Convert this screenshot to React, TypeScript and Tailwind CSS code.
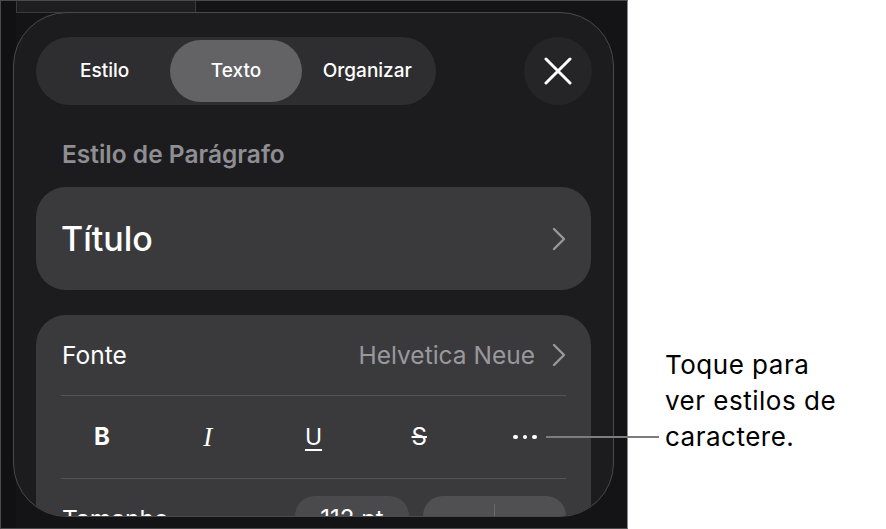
import { useState } from "react"

const TABS = ["Estilo", "Texto", "Organizar"]

function Chevron() {
  return (
    <svg width="14" height="24" viewBox="0 0 14 24" fill="none">
      <path d="M2 2 L12 12 L2 22" stroke="#98989d" strokeWidth="2.4" strokeLinecap="round" strokeLinejoin="round" />
    </svg>
  )
}

export default function App() {
  const [tab, setTab] = useState("Texto")

  return (
    <div
      className="relative flex h-[529px] w-[886px] overflow-hidden bg-white"
      style={{ fontFamily: "Inter, 'Noto Sans', sans-serif" }}
    >
      {/* iPad screen */}
      <div className="relative h-[529px] w-[628px] shrink-0 overflow-hidden border border-[#4a4a4c] border-r-[#8a8a8c] bg-[#141416]">
        <div className="absolute left-0 top-0 h-full w-[15px] bg-[#111113]" />
        <div className="absolute left-[15px] top-0 h-[12px] w-[180px] border-x border-b border-[#3a3a3c] bg-[#1e1e20]" />

        <div className="relative ml-[12px] mt-[11px] h-[505px] w-[601px] overflow-hidden rounded-[54px] border border-[#4a4a4c] bg-[#1c1c1e]">
          {/* header */}
          <div className="flex items-center justify-between pl-[22px] pr-[21px] pt-[24px]">
            <div className="grid h-[68px] w-[400px] grid-cols-3 rounded-full bg-[#2e2e30] p-[3px]">
              {TABS.map((t) => (
                <button
                  key={t}
                  onClick={() => setTab(t)}
                  className={`rounded-full text-[19px] font-medium text-white ${tab === t ? "bg-[#636366]" : ""}`}
                >
                  {t}
                </button>
              ))}
            </div>
            <button className="flex h-[68px] w-[68px] items-center justify-center rounded-full bg-[#252527]">
              <svg width="28" height="28" viewBox="0 0 28 28" fill="none">
                <path d="M2 2 L26 26 M26 2 L2 26" stroke="white" strokeWidth="3" strokeLinecap="round" />
              </svg>
            </button>
          </div>

          <div className="mt-[35px] pl-[48px] text-[24.5px] font-semibold leading-[28px] text-[#8e8e93]">
            Estilo de Parágrafo
          </div>

          <div className="mx-[22px] mt-[19px] flex h-[103px] items-center justify-between rounded-[30px] bg-[#3a3a3c] pl-[25px] pr-[25px]">
            <span className="text-[34px] font-medium text-white">Título</span>
            <Chevron />
          </div>

          {/* font group */}
          <div className="mx-[22px] mt-[25px] rounded-[30px] bg-[#3a3a3c] px-[25px]">
            <div className="flex h-[80px] items-center justify-between pl-[1px]">
              <span className="text-[24.5px] text-white">Fonte</span>
              <div className="flex items-center gap-[17px]">
                <span className="text-[24.5px] text-[#98989d]">Helvetica Neue</span>
                <Chevron />
              </div>
            </div>
            <div className="h-px bg-[#545458]" />
            <div className="flex h-[82px] items-center justify-between px-[21px]">
              <span className="w-10 text-center text-[24px] font-bold text-white">B</span>
              <span
                className="w-10 text-center text-[27px] italic text-white"
                style={{ fontFamily: "'Liberation Serif', serif" }}
              >
                I
              </span>
              <span className="w-10 text-center text-[23px] text-white underline decoration-[2px] underline-offset-[4px]">U</span>
              <span className="w-10 text-center text-[24px] text-white line-through decoration-[2px]">S</span>
              <span className="flex w-10 items-center justify-center gap-[5px]">
                <span className="h-[4.5px] w-[4.5px] rounded-full bg-white" />
                <span className="h-[4.5px] w-[4.5px] rounded-full bg-white" />
                <span className="h-[4.5px] w-[4.5px] rounded-full bg-white" />
              </span>
            </div>
            <div className="h-px bg-[#545458]" />
            <div className="flex h-[80px] items-center pl-[1px]">
              <span className="text-[24.5px] text-white">Tamanho</span>
              <div className="ml-auto flex items-center gap-[14px]">
                <div className="flex h-[46px] w-[114px] items-center justify-center rounded-[20px] bg-[#4a4a4c] text-[24px] text-white">
                  112 pt
                </div>
                <div className="flex h-[46px] w-[143px] items-center rounded-[20px] bg-[#505052] text-[26px] text-white">
                  <span className="flex-1 text-center">–</span>
                  <span className="h-[30px] w-px bg-[#6a6a6c]" />
                  <span className="flex-1 text-center">+</span>
                </div>
              </div>
            </div>
          </div>
        </div>
      </div>

      {/* callout */}
      <div className="pl-[37px] pt-[347px] text-[26px] leading-[36px] tracking-[0.5px] text-black">
        Toque para
        <br />
        ver estilos de
        <br />
        caractere.
      </div>
      <div className="absolute left-[546px] top-[436px] h-[2px] w-[113px] bg-[#7d7d7d]" />
    </div>
  )
}
